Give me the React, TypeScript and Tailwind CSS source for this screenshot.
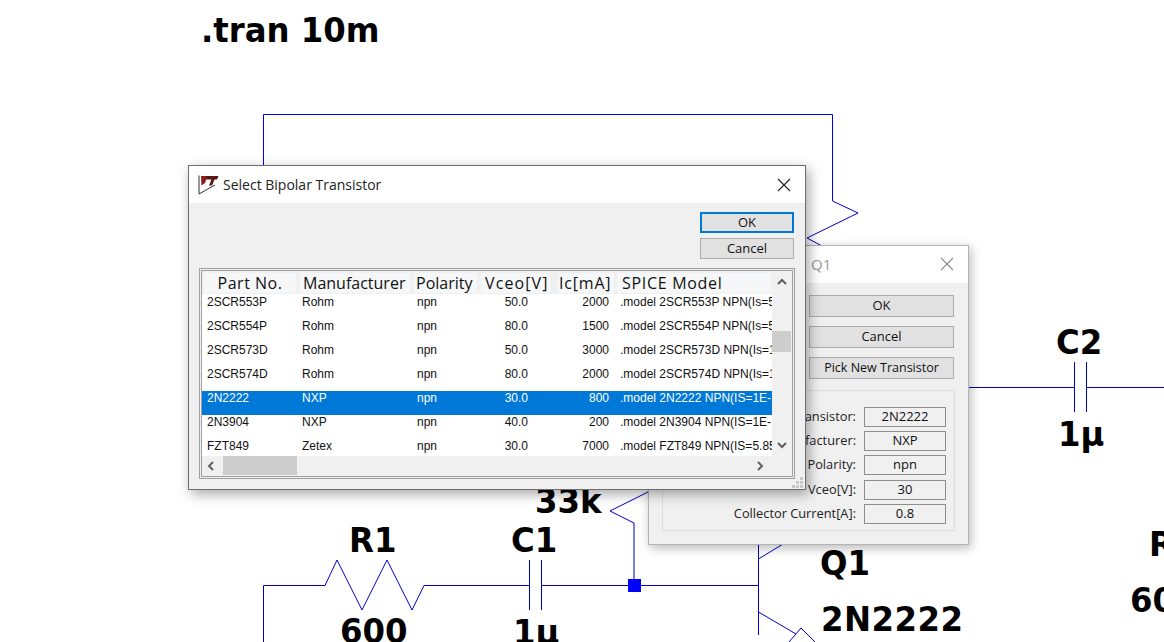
const rows = [
  ["2SCR553P", "Rohm", "npn", "50.0", "2000", ".model 2SCR553P NPN(Is=5"],
  ["2SCR554P", "Rohm", "npn", "80.0", "1500", ".model 2SCR554P NPN(Is=5"],
  ["2SCR573D", "Rohm", "npn", "50.0", "3000", ".model 2SCR573D NPN(Is=1"],
  ["2SCR574D", "Rohm", "npn", "80.0", "2000", ".model 2SCR574D NPN(Is=1"],
  ["2N2222", "NXP", "npn", "30.0", "800", ".model 2N2222 NPN(IS=1E-"],
  ["2N3904", "NXP", "npn", "40.0", "200", ".model 2N3904 NPN(IS=1E-"],
  ["FZT849", "Zetex", "npn", "30.0", "7000", ".model FZT849 NPN(IS=5.85"],
];

function Label({ cls, children }: { cls: string; children: string }) {
  return (
    <div
      className={`absolute whitespace-nowrap font-bold text-[33px] leading-[40px] text-black font-['DejaVu_Sans',sans-serif] scale-x-[0.98] origin-left ${cls}`}
    >
      {children}
    </div>
  );
}

function Btn({ children, cls = "" }: { children: string; cls?: string }) {
  return (
    <div className={`flex items-center justify-center bg-[#e1e1e1] border border-[#adadad] text-[#111] ${cls}`}>
      {children}
    </div>
  );
}

function CloseX({ color }: { color: string }) {
  return (
    <svg width="14" height="14" viewBox="0 0 14 14" className="block">
      <path d="M1 1L13 13M13 1L1 13" stroke={color} strokeWidth="1.1" fill="none" />
    </svg>
  );
}

function Field({ label, value, cls = "" }: { label: string; value: string; cls?: string }) {
  return (
    <div className={`flex items-center justify-end h-[20px] gap-[8px] ${cls}`}>
      <span className="text-[12.8px] text-[#222] whitespace-nowrap">{label}</span>
      <div className="w-[82px] h-[20px] flex items-center justify-center border border-[#8e8e8e] bg-[#f0f0f0] text-[13px] text-[#111]">
        {value}
      </div>
    </div>
  );
}

export default function App() {
  return (
    <div className="relative w-[1164px] h-[642px] overflow-hidden bg-white font-['Open_Sans','Noto_Sans',sans-serif]">
      <svg width="1164" height="642" className="absolute left-0 top-0" fill="none" stroke="#0000c8" strokeWidth="1">
        <path d="M263.5 165V114.5H832.5V201" stroke="#0000f0" />
        <path d="M832.5 201L858 213L807 238L822 246" />
        <path d="M806 387.5H1074M1087 387.5H1164" />
        <path d="M1074.5 362V412M1086.5 362V412" />
        <path d="M648 492L610 511L634 523V585" />
        <path d="M263.5 642V585.5H325L337 560L362 610L387 560L412 610L424 585.5H529M541 585.5H758" />
        <path d="M529.5 560V610M541.5 560V610" />
        <path d="M758.5 545V635" />
        <path d="M758.5 559L783 544M758.5 612L796 634" />
        <path d="M789 642L801 628L815 642" />
        <rect x="628" y="579" width="13" height="13" fill="#0000ff" stroke="none" />
      </svg>

      <Label cls="left-[201px] top-[11px]">.tran 10m</Label>
      <Label cls="left-[1056px] top-[323px]">C2</Label>
      <Label cls="left-[1058px] top-[415px]">1µ</Label>
      <Label cls="left-[535px] top-[482px]">33k</Label>
      <Label cls="left-[349px] top-[521px]">R1</Label>
      <Label cls="left-[511px] top-[521px]">C1</Label>
      <Label cls="left-[820px] top-[544px]">Q1</Label>
      <Label cls="left-[821px] top-[600px] tracking-[0.5px]">2N2222</Label>
      <Label cls="left-[340px] top-[612px]">600</Label>
      <Label cls="left-[513px] top-[613px]">1µ</Label>
      <Label cls="left-[1149px] top-[525px]">R</Label>
      <Label cls="left-[1130px] top-[581px]">60</Label>

      {/* Q1 window */}
      <div className="absolute left-[648px] top-[245px] w-[321px] h-[300px] flex flex-col bg-[#f0f0f0] border border-[#b4b4b4] shadow-[2px_3px_10px_rgba(0,0,0,0.28)]">
        <div className="h-[37px] bg-white flex items-center justify-between pl-[162px] pr-[14px] pb-[1px] shrink-0">
          <span className="text-[15px] text-[#9a9a9a]">Q1</span>
          <CloseX color="#8a8a8a" />
        </div>
        <div className="flex flex-col items-end pt-[12px] pr-[14px] gap-[9px]">
          <Btn cls="w-[145px] h-[22px] text-[13px]">OK</Btn>
          <Btn cls="w-[145px] h-[22px] text-[13px]">Cancel</Btn>
          <Btn cls="w-[145px] h-[22px] text-[12.5px]">Pick New Transistor</Btn>
        </div>
        <div className="mx-[13px] mt-[11px] h-[141px] border border-[#dcdcdc] flex flex-col justify-end gap-[4px] pr-[8px] pb-[6px]">
          <Field label="Transistor:" value="2N2222" />
          <Field label="Manufacturer:" value="NXP" />
          <Field label="Polarity:" value="npn" />
          <Field label="Vceo[V]:" value="30" cls="mt-[1px]" />
          <Field label="Collector Current[A]:" value="0.8" />
        </div>
      </div>

      {/* Select window */}
      <div className="absolute left-[188px] top-[165px] w-[618px] h-[325px] flex flex-col bg-[#f0f0f0] border border-[#6e6e6e] shadow-[3px_4px_12px_rgba(0,0,0,0.35)]">
        <div className="h-[37px] bg-white flex items-center shrink-0 pl-[9px] pr-[14px]">
          <svg width="21" height="20" viewBox="0 0 21 20" className="mr-[5px]">
            <path d="M1 0.5V19L17 10" fill="none" stroke="#333" strokeWidth="1" />
            <path d="M3 1H9.5L7 8L3.5 10.5Z" fill="#8a1c1c" />
            <path d="M9 1H20.5L19 4.5H16.5L14 10.5H11L13.5 4.5H8Z" fill="#5a1414" />
          </svg>
          <span className="text-[14px] text-[#222] flex-1 -ml-[1px]">Select Bipolar Transistor</span>
          <CloseX color="#222" />
        </div>
        <div className="flex flex-col items-end pr-[11px] pt-[9px] gap-[5px] shrink-0">
          <Btn cls="w-[94px] h-[21px] text-[13px] border-2 !border-[#0078d7]">OK</Btn>
          <Btn cls="w-[94px] h-[21px] text-[13px]">Cancel</Btn>
        </div>
        <div className="mx-[10px] mt-[9px] h-[211px] border border-[#a0a0a0] p-[1px]">
          <div className="h-full border border-[#a0a0a0] bg-[#f0f0f0] flex">
            <div className="flex-1 min-w-0 flex flex-col">
              <div className="h-[23px] flex items-start pt-[2px] shrink-0 text-[16px] leading-[20px] text-[#111] whitespace-nowrap overflow-hidden">
                <span className="ml-[2px] w-[92px] h-[20px] shrink-0 bg-[#f6f7f8] text-center tracking-[0.5px]">Part No.</span>
                <span className="ml-[4px] w-[110px] h-[20px] shrink-0 bg-[#f6f7f8] pl-[3px]">Manufacturer</span>
                <span className="ml-[4px] w-[63px] h-[20px] shrink-0 bg-[#f6f7f8] pl-[2px]">Polarity</span>
                <span className="ml-[4px] w-[69px] h-[20px] shrink-0 bg-[#f6f7f8] pl-[4px] tracking-[1.1px]">Vceo[V]</span>
                <span className="ml-[8px] w-[56px] h-[20px] shrink-0 bg-[#f6f7f8] pl-[1px] tracking-[0.8px]">Ic[mA]</span>
                <span className="ml-[3px] w-[154px] h-[20px] shrink-0 bg-[#f6f7f8] pl-[5px] tracking-[0.7px]">SPICE Model</span>
              </div>
              <div className="flex-1 bg-white overflow-hidden text-[12px] leading-[12px] text-[#111] pt-[1px] font-['Liberation_Sans',sans-serif]">
                {rows.map((r, i) => (
                  <div key={i} className={`h-[24px] pt-[1px] flex items-start whitespace-nowrap overflow-hidden ${r[0] === "2N2222" ? "bg-[#0078d7] text-white" : ""}`}>
                    <span className="w-[100px] shrink-0 pl-[5px]">{r[0]}</span>
                    <span className="w-[115px] shrink-0">{r[1]}</span>
                    <span className="w-[69px] shrink-0">{r[2]}</span>
                    <span className="w-[42px] shrink-0 text-right">{r[3]}</span>
                    <span className="w-[81px] shrink-0 text-right">{r[4]}</span>
                    <span className="pl-[11px]">{r[5]}</span>
                  </div>
                ))}
              </div>
              <div className="h-[20px] shrink-0 flex items-center bg-[#f0f0f0] pl-[4px]">
                <svg width="10" height="10" viewBox="0 0 10 10"><path d="M7 1L3 5L7 9" fill="none" stroke="#606060" strokeWidth="2" /></svg>
                <div className="ml-[7px] w-[74px] h-[19px] self-start bg-[#cdcdcd]" />
                <div className="flex-1" />
                <svg width="10" height="10" viewBox="0 0 10 10" className="mr-[7px]"><path d="M3 1L7 5L3 9" fill="none" stroke="#606060" strokeWidth="2" /></svg>
              </div>
            </div>
            <div className="w-[20px] shrink-0 flex flex-col items-center pt-[7px] bg-[#f0f0f0]">
              <svg width="10" height="8" viewBox="0 0 10 8"><path d="M1 6L5 2L9 6" fill="none" stroke="#606060" strokeWidth="2" /></svg>
              <div className="mt-[45px] w-[19px] self-start h-[21px] bg-[#cdcdcd]" />
              <svg width="10" height="8" viewBox="0 0 10 8" className="mt-[89px]"><path d="M1 2L5 6L9 2" fill="none" stroke="#606060" strokeWidth="2" /></svg>
            </div>
          </div>
        </div>
        <svg width="12" height="12" viewBox="0 0 12 12" className="absolute right-[1px] bottom-[1px]">
          <path d="M8 1h3v3h-3zM4 5h3v3h-3zM8 5h3v3h-3zM0 9h3v3h-3zM4 9h3v3h-3zM8 9h3v3h-3z" fill="#c8c8c8" />
        </svg>
      </div>
    </div>
  );
}
